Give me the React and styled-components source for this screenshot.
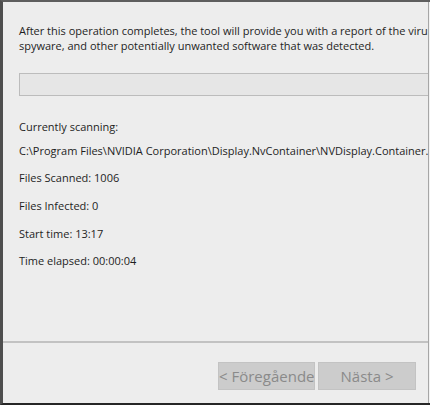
import React from "react";
import styled, { createGlobalStyle } from "styled-components";

const Global = createGlobalStyle`
  html, body { margin: 0; padding: 0; background: #ededed; }
  * { box-sizing: border-box; }
`;

const Frame = styled.div`
  width: 430px;
  height: 405px;
  display: flex;
  background: #f2f2f2;
  border-top: 2px solid #5e5e5e;
  border-left: 3px solid #4e4e4e;
  border-bottom: 2px solid #262626;
  overflow: hidden;
`;

const Panel = styled.div`
  width: 426px;
  flex: 0 0 426px;
  display: flex;
  flex-direction: column;
  background: #ededed;
  border-right: 1px solid #a6a6a6;
  font-family: "Segoe UI", "Open Sans", sans-serif;
  color: #1e1e1e;
`;

const Content = styled.div`
  flex: 1;
  padding: 21px 0 0 16px;
  overflow: hidden;
  white-space: nowrap;
`;

const Intro = styled.p`
  margin: 0;
  font-size: 11px;
  line-height: 15px;
  white-space: normal;
  width: 440px;
`;

const Progress = styled.div`
  margin-top: 20px;
  height: 23px;
  width: 440px;
  background: #e6e6e6;
  border: 1px solid #bcbcbc;
`;

const Info = styled.div`
  margin-top: ${(p) => p.$top}px;
  font-size: 11px;
  line-height: 15px;
`;

const Separator = styled.div`
  height: 2px;
  flex: 0 0 2px;
  background: #c2c2c2;
`;

const Footer = styled.div`
  flex: 0 0 60px;
  display: flex;
  justify-content: flex-end;
  align-items: flex-start;
  gap: 3px;
  padding: 19px 12px 0 0;
`;

const Button = styled.button`
  width: ${(p) => p.$w}px;
  height: 28px;
  padding: 0;
  background: #cccccc;
  border: 1px solid #c3c3c3;
  color: #8a8a8a;
  font-family: "Segoe UI", "Open Sans", sans-serif;
  font-size: 15px;
  line-height: 26px;
  text-align: center;
  white-space: nowrap;
  overflow: hidden;
`;

export default function App() {
  return (
    <>
      <Global />
      <Frame>
        <Panel>
          <Content>
            <Intro>
              After this operation completes, the tool will provide you with a report of the viruses,
              spyware, and other potentially unwanted software that was detected.
            </Intro>
            <Progress />
            <Info $top={22.5}>Currently scanning:</Info>
            <Info $top={9}>C:\Program Files\NVIDIA Corporation\Display.NvContainer\NVDisplay.Container.exe</Info>
            <Info $top={12.5}>Files Scanned: 1006</Info>
            <Info $top={13}>Files Infected: 0</Info>
            <Info $top={12.5}>Start time: 13:17</Info>
            <Info $top={12.5}>Time elapsed: 00:00:04</Info>
          </Content>
          <Separator />
          <Footer>
            <Button $w={97} disabled>&lt; Föregående</Button>
            <Button $w={98} disabled>Nästa &gt;</Button>
          </Footer>
        </Panel>
      </Frame>
    </>
  );
}
